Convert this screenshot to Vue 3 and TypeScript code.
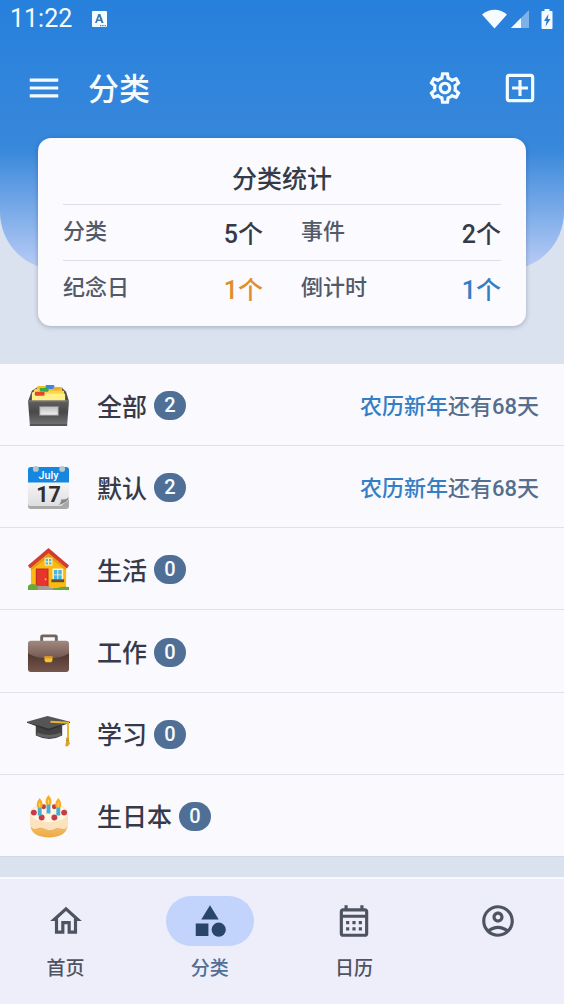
<script setup lang="ts">
import { ref } from 'vue'

interface Stat {
  label: string
  count: number
  tone: 'dark' | 'orange' | 'blue'
}

interface Category {
  id: string
  name: string
  count: number
  event?: string
  remaining?: string
}

interface Tab {
  id: string
  label: string
  showLabel: boolean
  path: string
}

const stats: Stat[] = [
  { label: '分类', count: 5, tone: 'dark' },
  { label: '事件', count: 2, tone: 'dark' },
  { label: '纪念日', count: 1, tone: 'orange' },
  { label: '倒计时', count: 1, tone: 'blue' },
]

const categories: Category[] = [
  { id: 'all', name: '全部', count: 2, event: '农历新年', remaining: '还有68天' },
  { id: 'default', name: '默认', count: 2, event: '农历新年', remaining: '还有68天' },
  { id: 'life', name: '生活', count: 0 },
  { id: 'work', name: '工作', count: 0 },
  { id: 'study', name: '学习', count: 0 },
  { id: 'birthday', name: '生日本', count: 0 },
]

const tabs: Tab[] = [
  {
    id: 'home',
    label: '首页',
    showLabel: true,
    path: 'M12 5.69l5 4.5V18h-2v-6H9v6H7v-7.81l5-4.5M12 3L2 12h3v8h6v-6h2v6h6v-8h3L12 3z',
  },
  {
    id: 'category',
    label: '分类',
    showLabel: true,
    path: 'M12 2l-5.5 9h11zM17.5 13a4.5 4.5 0 1 0 0 9 4.5 4.5 0 0 0 0-9zM3 13.5h8v8H3z',
  },
  {
    id: 'calendar',
    label: '日历',
    showLabel: true,
    path: 'M19 4h-1V2h-2v2H8V2H6v2H5c-1.11 0-2 .9-2 2v14c0 1.1.89 2 2 2h14c1.1 0 2-.9 2-2V6c0-1.1-.9-2-2-2zm0 16H5V10h14v10zm0-12H5V6h14v2zM9 14H7v-2h2v2zm4 0h-2v-2h2v2zm4 0h-2v-2h2v2zm-8 4H7v-2h2v2zm4 0h-2v-2h2v2zm4 0h-2v-2h2v2z',
  },
  {
    id: 'profile',
    label: '我的',
    showLabel: false,
    path: 'M12 2C6.48 2 2 6.48 2 12s4.48 10 10 10 10-4.48 10-10S17.52 2 12 2zM7.35 18.5C8.66 17.56 10.26 17 12 17s3.34.56 4.65 1.5c-1.31.94-2.91 1.5-4.65 1.5s-3.34-.56-4.65-1.5zm10.79-1.38C16.45 15.8 14.32 15 12 15s-4.45.8-6.14 2.12C4.7 15.73 4 13.95 4 12c0-4.42 3.58-8 8-8s8 3.58 8 8c0 1.95-.7 3.73-1.86 5.12zM12 6c-1.93 0-3.5 1.57-3.5 3.5S10.07 13 12 13s3.5-1.57 3.5-3.5S13.93 6 12 6zm0 5c-.83 0-1.5-.67-1.5-1.5S11.17 8 12 8s1.5.67 1.5 1.5S12.83 11 12 11z',
  },
]

const activeTab = ref('category')
</script>

<template>
  <div class="page">
    <header class="hero">
      <div class="status">
        <span class="clock">11:22</span>
        <svg class="status-app" viewBox="0 0 16 17" aria-hidden="true">
          <rect width="15" height="16" rx="1" fill="#f4fcff" />
          <path d="M3 12L6.300 3h2l3.300 9H9.500l-.7-2H5.500L4.800 12zM6 8.500h2.300L7.150 5.500z" fill="#3a75b4" />
          <path d="M8 14h1.300v1.300H8zM10.300 14h1.300v1.300h-1.300zM12.600 14h1.300v1.300h-1.300z" fill="#3a75b4" />
        </svg>
        <span class="spacer"></span>
        <svg class="wifi" viewBox="0 0 26 20" aria-hidden="true">
          <path d="M0 5.500C7-1 18-1 25 5.500L12.500 19.500z" fill="#f4fcff" />
        </svg>
        <svg class="signal" viewBox="0 0 18 18" aria-hidden="true">
          <path d="M18 0v18H0z" fill="#7db2e9" />
          <path d="M10 8v10H0z" fill="#f4fcff" />
        </svg>
        <svg class="battery" viewBox="0 0 12 20" aria-hidden="true">
          <path d="M3.500 0h5v2h2q1 0 1 1v16q0 1-1 1h-9q-1 0-1-1V3q0-1 1-1h2z" fill="#f4fcff" />
          <path d="M7.500 5L3 12h2.500l-1 5.500L9.500 10H6.800z" fill="#2b7bcc" />
        </svg>
      </div>
      <div class="appbar">
        <button class="icon-button" type="button" aria-label="菜单">
          <svg class="icon" viewBox="0 0 24 24"><path d="M3 18h18v-2H3v2zm0-5h18v-2H3v2zm0-7v2h18V6H3z" /></svg>
        </button>
        <h1 class="title">分类</h1>
        <span class="spacer"></span>
        <button class="icon-button" type="button" aria-label="设置">
          <svg class="icon" viewBox="0 0 24 24"><path d="M19.43 12.98c.04-.32.07-.64.07-.98s-.03-.66-.07-.98l2.11-1.65c.19-.15.24-.42.12-.64l-2-3.46c-.09-.16-.26-.25-.44-.25-.06 0-.12.01-.17.03l-2.49 1c-.52-.4-1.08-.73-1.69-.98l-.38-2.65C14.46 2.18 14.25 2 14 2h-4c-.25 0-.46.18-.49.42l-.38 2.65c-.61.25-1.17.59-1.69.98l-2.49-1c-.06-.02-.12-.03-.18-.03-.17 0-.34.09-.43.25l-2 3.46c-.13.22-.07.49.12.64l2.11 1.65c-.04.32-.07.65-.07.98s.03.66.07.98l-2.11 1.65c-.19.15-.24.42-.12.64l2 3.46c.09.16.26.25.44.25.06 0 .12-.01.17-.03l2.49-1c.52.4 1.08.73 1.69.98l.38 2.65c.03.24.24.42.49.42h4c.25 0 .46-.18.49-.42l.38-2.65c.61-.25 1.17-.59 1.69-.98l2.49 1c.06.02.12.03.18.03.17 0 .34-.09.43-.25l2-3.46c.12-.22.07-.49-.12-.64l-2.11-1.65zm-1.98-1.71c.04.31.05.52.05.73 0 .21-.02.43-.05.73l-.14 1.13.89.7 1.08.84-.7 1.21-1.27-.51-1.04-.42-.9.68c-.43.32-.84.56-1.25.73l-1.06.43-.16 1.13-.2 1.35h-1.4l-.19-1.35-.16-1.13-1.06-.43c-.43-.18-.83-.41-1.23-.71l-.91-.7-1.06.43-1.27.51-.7-1.21 1.08-.84.89-.7-.14-1.13c-.03-.31-.05-.54-.05-.74s.02-.43.05-.73l.14-1.13-.89-.7-1.08-.84.7-1.21 1.27.51 1.04.42.9-.68c.43-.32.84-.56 1.25-.73l1.06-.43.16-1.13.2-1.35h1.39l.19 1.35.16 1.13 1.06.43c.43.18.83.41 1.23.71l.91.7 1.06-.43 1.27-.51.7 1.21-1.07.85-.89.7.14 1.13zM12 8c-2.21 0-4 1.79-4 4s1.79 4 4 4 4-1.79 4-4-1.79-4-4-4zm0 6c-1.1 0-2-.9-2-2s.9-2 2-2 2 .9 2 2-.9 2-2 2z" /></svg>
        </button>
        <button class="icon-button" type="button" aria-label="添加">
          <svg class="icon" viewBox="0 0 24 24"><path d="M19 3H5c-1.11 0-2 .9-2 2v14c0 1.1.89 2 2 2h14c1.1 0 2-.9 2-2V5c0-1.1-.9-2-2-2zm0 16H5V5h14v14zm-8-2h2v-4h4v-2h-4V7h-2v4H7v2h4z" /></svg>
        </button>
      </div>
    </header>

    <section class="card">
      <h2 class="card-title">分类统计</h2>
      <dl class="stats">
        <div v-for="stat in stats" :key="stat.label" class="stat">
          <dt class="stat-label">{{ stat.label }}</dt>
          <dd class="stat-value" :class="stat.tone">{{ stat.count }}个</dd>
        </div>
      </dl>
    </section>

    <main class="list">
      <a v-for="item in categories" :key="item.id" class="row" href="#">
        <svg v-if="item.id === 'all'" class="emoji" viewBox="0 0 44 44" aria-hidden="true">
          <defs>
            <linearGradient id="boxFront" x1="0" y1="0" x2="0" y2="1">
              <stop offset="0" stop-color="#616161" />
              <stop offset=".45" stop-color="#484848" />
              <stop offset="1" stop-color="#777" />
            </linearGradient>
            <linearGradient id="boxLabel" x1="0" y1="0" x2="0" y2="1">
              <stop offset="0" stop-color="#bdbdbd" />
              <stop offset="1" stop-color="#f2f2f2" />
            </linearGradient>
          </defs>
          <path d="M1 18L5 7l6-4h24l5 5 3 10z" fill="#4c4c4a" />
          <path d="M10 4q0-2 2-2h6l2 1h16v14H10z" fill="#f3bd26" />
          <rect x="19" y="1" width="9" height="4" rx="1" fill="#4283db" />
          <rect x="27" y="3" width="7" height="3" rx="1" fill="#f7a928" />
          <path d="M7 7q0-2 2-2h10l2 2h17v11H7z" fill="#ffd54f" />
          <rect x="13" y="4" width="9" height="4" rx="1" fill="#3caa47" />
          <path d="M5 10q0-2 2-2h10l2 2h20v8H5z" fill="#fff08a" />
          <rect x="8" y="8" width="10" height="4" rx="1" fill="#e2462c" />
          <path d="M1 17h42l-2 26H3z" fill="url(#boxFront)" />
          <path d="M1 17h42v1H1z" fill="#858585" />
          <path d="M3 41h38v2H3z" fill="#555" />
          <rect x="13" y="23" width="19" height="9" fill="url(#boxLabel)" stroke="#888" />
        </svg>

        <svg v-else-if="item.id === 'default'" class="emoji" viewBox="0 0 44 44" aria-hidden="true">
          <defs>
            <linearGradient id="pageFill" x1="0" y1="0" x2="0" y2="1">
              <stop offset="0" stop-color="#fafafa" />
              <stop offset="1" stop-color="#dedede" />
            </linearGradient>
          </defs>
          <path d="M1 12h42v29q0 3-3 3H4q-3 0-3-3z" fill="#a9a9a9" />
          <path d="M1 12h42v22l-8 7H4q-3 0-3-3z" fill="url(#pageFill)" />
          <path d="M1 17V4q0-3 3-3h36q3 0 3 3v13z" fill="#1687df" />
          <circle cx="9" cy="3" r="3" fill="#b9c5cd" />
          <circle cx="36" cy="3" r="3" fill="#b9c5cd" />
          <path d="M32 40q3-2 3-6 4 1 8-2-2 6-11 8z" fill="#888" />
          <text class="cal-month" x="22" y="13" text-anchor="middle">July</text>
          <text class="cal-day" x="22" y="37" text-anchor="middle">17</text>
        </svg>

        <svg v-else-if="item.id === 'life'" class="emoji" viewBox="0 0 44 44" aria-hidden="true">
          <path d="M4 19L22 3l18 16v22H4z" fill="#fdb913" />
          <path d="M4 20L22 4l18 16v3L22 9 4 23z" fill="#e99b14" />
          <path d="M1 18L22 0l21 18-2 3L22 5 3 21z" fill="#d13c2d" />
          <path d="M9 42V21h13v21z" fill="#b92b23" />
          <path d="M10 41V22h11v19z" fill="#e5352d" />
          <circle cx="19" cy="32" r="1" fill="#ffc52e" />
          <path d="M18 10h8v8h-8z" fill="#fff3b0" />
          <path d="M19 11h2.500v2.500H19zM22.500 11H25v2.500h-2.500zM19 14.500h2.500V17H19zM22.500 14.500H25V17h-2.500z" fill="#55b9e5" />
          <path d="M26 21h11v13H26z" fill="#fff3c4" />
          <path d="M27.500 22.500H31v4.500h-3.500zM32 22.500h3.500V27H32zM27.500 28H31v4.500h-3.500zM32 28h3.500v4.500H32z" fill="#45b5e6" />
          <path d="M25 32h13v3H25z" fill="#6a4b30" />
          <path d="M1 43v-4q2-3 6-2 4 0 5 4h19q5-2 12-1v3z" fill="#65a93b" />
          <path d="M11 39h12v2h4v2H11z" fill="#a89a91" />
        </svg>

        <svg v-else-if="item.id === 'work'" class="emoji" viewBox="0 0 44 44" aria-hidden="true">
          <defs>
            <linearGradient id="caseTop" x1="0" y1="0" x2="0" y2="1">
              <stop offset="0" stop-color="#a1887f" />
              <stop offset="1" stop-color="#735850" />
            </linearGradient>
            <linearGradient id="caseBody" x1="0" y1="0" x2="0" y2="1">
              <stop offset="0" stop-color="#4a332d" />
              <stop offset="1" stop-color="#75564d" />
            </linearGradient>
          </defs>
          <path d="M15 12V6q0-1 1-1h13q1 0 1 1v6" fill="none" stroke="#75645e" stroke-width="3" />
          <path d="M1 21h42v18q0 3-3 3H4q-3 0-3-3z" fill="url(#caseBody)" />
          <path d="M1 23V13q0-3 3-3h36q3 0 3 3v10q-9 5-21 5T1 23z" fill="url(#caseTop)" />
          <path d="M18 26h8v4l-1 2h-6l-1-2z" fill="#fbc02d" />
          <path d="M18 26h8v2h-8z" fill="#d99820" />
        </svg>

        <svg v-else-if="item.id === 'study'" class="emoji" viewBox="0 0 44 44" aria-hidden="true">
          <path d="M9 13h27v10q-13 7-27 0z" fill="#424242" />
          <path d="M10 20q13 5 25 0v3q-13 5-25 0z" fill="#626262" />
          <path d="M0 9L21 3l23 6-22 8z" fill="#555" />
          <path d="M0 9l22 7 22-7v1l-22 8L0 10z" fill="#303030" />
          <path d="M24 9l18 1v17" fill="none" stroke="#e4b532" stroke-width="2" />
          <path d="M40 25h3v4l1 2-2 3h-3l1-5z" fill="#d8a52d" />
          <path d="M40 28h3" stroke="#b57f23" />
        </svg>

        <svg v-else class="emoji" viewBox="0 0 44 44" aria-hidden="true">
          <defs>
            <linearGradient id="cakeSide" x1="0" y1="0" x2="0" y2="1">
              <stop offset="0" stop-color="#ffdf83" />
              <stop offset="1" stop-color="#eda745" />
            </linearGradient>
          </defs>
          <path d="M4 18v15c1 14 36 14 37 0V18z" fill="url(#cakeSide)" />
          <path d="M3 19c0-13 39-13 39 0v13q-2 5-7 3-5-2-8 1-4 2-9-1-4-2-8 0-5 1-7-4z" fill="#fce2bd" />
          <ellipse cx="22.500" cy="19" rx="18.500" ry="9" fill="#fff6e2" />
          <path d="M4 33q2 4 6 2 4-2 8 0 5 3 9 1 3-3 8-1 4 2 6-2" fill="none" stroke="#e9ac5c" />
          <g fill="#c93b44">
            <circle cx="7" cy="18" r="3" /><circle cx="15" cy="23" r="3" />
            <circle cx="28" cy="23" r="3" /><circle cx="38" cy="18" r="3" />
            <circle cx="17" cy="12" r="2.500" /><circle cx="28" cy="12" r="2.500" />
          </g>
          <path d="M11 12h4v9h-4zM20 9h4v10h-4zM30 12h4v9h-4z" fill="#48afd0" />
          <path d="M13 3q-5 6-2 10h4q3-4-2-10zM22 0q-5 6-2 10h4q3-4-2-10zM32 3q-5 6-2 10h4q3-4-2-10z" fill="#f7ad24" />
          <path d="M13 8v4M22 5v4M32 8v4" stroke="#ffdc61" />
        </svg>

        <span class="row-name">{{ item.name }}</span>
        <span class="badge">{{ item.count }}</span>
        <span class="spacer"></span>
        <span v-if="item.event" class="next"><span class="next-event">{{ item.event }}</span>{{ item.remaining }}</span>
      </a>
    </main>

    <nav class="tabs">
      <button
        v-for="tab in tabs"
        :key="tab.id"
        type="button"
        class="tab"
        :class="{ active: tab.id === activeTab }"
        :aria-label="tab.label"
        :aria-current="tab.id === activeTab ? 'page' : undefined"
        @click="activeTab = tab.id"
      >
        <span class="pill"><svg class="icon" viewBox="0 0 24 24"><path :d="tab.path" /></svg></span>
        <span v-if="tab.showLabel" class="tab-label">{{ tab.label }}</span>
      </button>
    </nav>
  </div>
</template>

<style>
body {
  margin: 0;
  background: #dbe2ef;
}
</style>

<style scoped>
.page {
  display: flex;
  flex-direction: column;
  min-height: 100vh;
  background: #dbe2ef;
  color: #363a48;
  font-family: Roboto, "Noto Sans CJK SC", sans-serif;
  font-weight: 500;
}

.hero {
  box-sizing: border-box;
  padding-bottom: 142px;
  border-radius: 0 0 58px 58px;
  background: linear-gradient(#2780dc 0, #3888db 150px, #bbcdf6 100%);
  color: #f4fcff;
}

.status {
  display: flex;
  align-items: center;
  height: 38px;
  padding: 0 11px 0 10px;
}

.clock {
  margin-right: 20px;
  font-size: 25px;
  line-height: 28px;
  font-weight: 400;
}

.spacer {
  flex: 1;
}

.status-app {
  width: 16px;
  height: 17px;
}

.wifi {
  width: 26px;
  height: 20px;
  margin-right: 3px;
}

.signal {
  width: 18px;
  height: 18px;
  margin-right: 12px;
}

.battery {
  width: 12px;
  height: 20px;
}

.appbar {
  display: flex;
  align-items: center;
  height: 80px;
  margin-top: 10px;
  padding: 0 25px;
}

.icon {
  display: block;
  width: 38px;
  height: 38px;
  fill: currentColor;
}

.icon-button {
  padding: 0;
  border: 0;
  background: none;
  color: inherit;
}

.icon-button + .icon-button {
  margin-left: 37px;
}

.title {
  margin: 0 0 0 25px;
  padding-top: 4px;
  font-size: 31px;
  line-height: 40px;
  font-weight: 500;
}

.card {
  margin: -132px 38px 38px;
  padding: 24px 25px 10px;
  border-radius: 13px;
  background: #fafaff;
  box-shadow: 0 1px 5px rgba(40, 50, 80, 0.32);
}

.card-title {
  margin: 0;
  padding-bottom: 6px;
  font-size: 25px;
  line-height: 36px;
  font-weight: 500;
  text-align: center;
}

.stats {
  display: grid;
  grid-template-columns: 1fr 1fr;
  margin: 0;
}

.stat {
  display: flex;
  justify-content: space-between;
  height: 55px;
  border-top: 1px solid #dddfe6;
}

.stat:nth-child(odd) {
  padding-right: 19px;
}

.stat:nth-child(even) {
  padding-left: 19px;
}

.stat-label {
  color: #535969;
  font-size: 22px;
  line-height: 54px;
}

.stat-value {
  margin: 0;
  font-size: 25px;
  line-height: 60px;
}

.orange {
  color: #e08d2b;
}

.blue {
  color: #347ec5;
}

.list {
  display: grid;
  flex: 1;
  grid-auto-rows: minmax(72px, 1fr);
  margin-bottom: 20px;
  background: #f9f9fe;
}

.row {
  display: flex;
  align-items: center;
  padding: 2px 25px 0 27px;
  border-bottom: 1px solid #e0e2e9;
  color: inherit;
  text-decoration: none;
}

.row:last-child {
  border-bottom-color: #d1d9e8;
}

.emoji {
  width: 43px;
  height: 43px;
  margin-right: 27px;
}

.cal-month {
  fill: #fff;
  font: 500 11px Roboto, sans-serif;
}

.cal-day {
  fill: #303030;
  font: bold 22px Roboto, sans-serif;
}

.row-name {
  padding-top: 4px;
  font-size: 25px;
  line-height: 36px;
}

.badge {
  min-width: 32px;
  margin-left: 7px;
  border-radius: 15px;
  background: #506f96;
  color: #f8fbff;
  font-size: 20px;
  line-height: 29px;
  text-align: center;
}

.next {
  padding-top: 2px;
  color: #566d8c;
  font-size: 22px;
  line-height: 32px;
}

.next-event {
  color: #347ec5;
}

.tabs {
  display: flex;
  gap: 13px;
  box-sizing: border-box;
  height: 127px;
  border-top: 2px solid #f8f8ff;
  background: #eeeefa;
}

.tab {
  display: flex;
  flex: 1;
  flex-direction: column;
  align-items: center;
  padding: 17px 0 0;
  border: 0;
  background: none;
  color: #4e5361;
  font: inherit;
}

.pill {
  display: flex;
  align-items: center;
  justify-content: center;
  width: 88px;
  height: 50px;
  border-radius: 25px;
}

.tab-label {
  margin-top: 9px;
  font-size: 19px;
  line-height: 28px;
}

.active {
  color: #506f96;
}

.active .pill {
  background: #c2d3fc;
  color: #294568;
}
</style>
